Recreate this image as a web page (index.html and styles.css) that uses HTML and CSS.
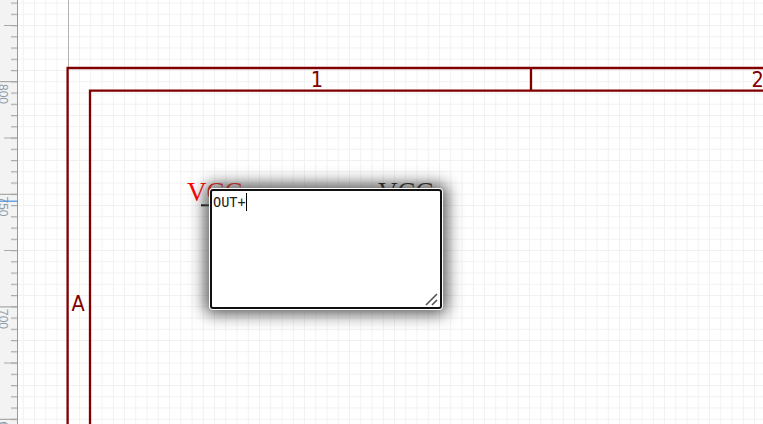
FILE: index.html
```
<!DOCTYPE html>
<html lang="en">
<head>
<meta charset="utf-8">
<title>Schematic editor</title>
<link rel="stylesheet" href="styles.css">
</head>
<body>
<main class="editor">
  <svg class="ruler" width="18" height="424" viewBox="0 0 18 424">
    <defs>
      <pattern id="ticks" y="2.5" width="18" height="11.25" patternUnits="userSpaceOnUse">
        <path class="tick" d="M11 .6H18"/>
      </pattern>
    </defs>
    <rect width="18" height="424" fill="url(#ticks)"/>
    <path class="tick" d="M4 25.5H18M0 81.7H18M4 138H18M0 194.3H18M4 250.5H18M0 306.8H18M4 363H18M0 419.3H18"/>
    <g class="ruler-text">
      <text transform="translate(-1 84) rotate(90)">800</text>
      <text transform="translate(-1 196.5) rotate(90)">750</text>
      <text transform="translate(-1 309) rotate(90)">700</text>
      <text transform="translate(-1 421.5) rotate(90)">650</text>
    </g>
    <path class="edge" d="M17.5 0V424"/>
    <path class="marker" d="M0 201.2H18"/>
  </svg>
  <section class="sheet">
    <svg class="drawing" width="745" height="424" viewBox="18 0 745 424">
      <defs>
        <pattern id="grid" x=".3" y="2.5" width="11.25" height="11.25" patternUnits="userSpaceOnUse">
          <path class="grid-line" d="M.5 0V11.25M0 .5H11.25"/>
        </pattern>
      </defs>
      <rect x="18" width="745" height="424" fill="url(#grid)"/>
      <path class="axis" d="M68.5 0V68"/>
      <path class="frame" d="M67.6 430V68H770M90 430V90.6H770M531 68V90"/>
      <g class="frame-text">
        <text x="317" y="86.6" text-anchor="middle">1</text>
        <text x="751.5" y="86.6">2</text>
        <text x="78" y="310.6" text-anchor="middle">A</text>
      </g>
      <path class="pin" d="M201 205.3H232"/>
      <text class="net selected" x="187" y="200.5">VCC</text>
      <text class="net" x="378" y="200.5">VCC</text>
    </svg>
    <div class="text-editor">
      <span class="value">OUT+</span><span class="caret"></span>
      <svg class="grip" width="13" height="13" viewBox="0 0 13 13"><path d="M1 12L12 1M7 12L12 7"/></svg>
    </div>
  </section>
</main>
</body>
</html>
```
FILE: styles.css
```
body { margin: 0; overflow: hidden; background: #fff; }
.editor { display: flex; width: 763px; height: 424px; overflow: hidden; }
.ruler { display: block; flex: none; background: #f3f3f3; }
.tick { stroke: #aaa; stroke-width: 1.2; }
.edge { stroke: #999; stroke-width: 1; }
.marker { stroke: #4a90e2; stroke-width: 1.2; }
.ruler-text { font: 12px "Liberation Sans", Arial, sans-serif; fill: #8f9ba8; }
.sheet { position: relative; flex: 1; }
.drawing { display: block; }
.grid-line { stroke: #f1f1f1; stroke-width: 1; fill: none; }
.axis { stroke: #b5b5b5; }
.frame { fill: none; stroke: #800000; stroke-width: 2.3; }
.frame-text { font: 21.5px "DejaVu Sans Condensed", "DejaVu Sans", Verdana, sans-serif; fill: #800000; }
.pin { stroke: #000; stroke-width: 2; }
.net { font: 27px "Liberation Serif", "Times New Roman", serif; fill: #000; }
.selected { fill: #f00; }
.text-editor {
  position: absolute;
  left: 192px;
  top: 189px;
  box-sizing: border-box;
  width: 232px;
  height: 120px;
  padding: 2px 1px;
  display: flex;
  border: 2px solid #101010;
  border-radius: 3px;
  background: #fff;
  box-shadow: 0 0 0 1px #fff, 0 0 16px 5px #555;
}
.value { font: 13.6px/18px "DejaVu Sans Mono", monospace; color: #222; width: 33px; white-space: nowrap; }
.caret { width: 1px; height: 18px; background: #000; }
.grip { position: absolute; right: 2px; bottom: 1px; fill: none; stroke: #555; stroke-width: 1.6; }
```
